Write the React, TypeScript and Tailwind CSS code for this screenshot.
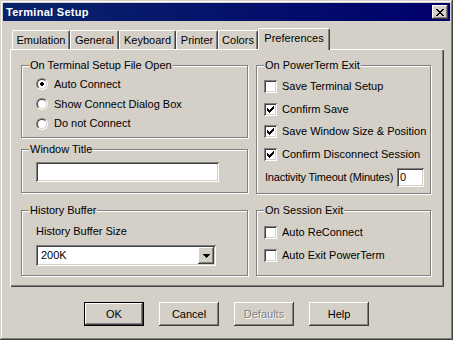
import React from "react";

const RAISED =
  "shadow-[inset_-1px_-1px_#404040,inset_1px_1px_#ffffff,inset_-2px_-2px_#808080,inset_2px_2px_#d4d0c8]";
const SUNKEN =
  "shadow-[inset_1px_1px_#808080,inset_-1px_-1px_#ffffff,inset_2px_2px_#404040,inset_-2px_-2px_#d4d0c8]";

function CheckBox({ checked }: { checked: boolean }) {
  return (
    <div className={"relative w-[13px] h-[13px] shrink-0 bg-white " + SUNKEN}>
      {checked && (
        <svg
          className="absolute left-[3px] top-[3px]"
          width="7"
          height="7"
          viewBox="0 0 7 7"
          shapeRendering="crispEdges"
        >
          <path
            fill="#000"
            d="M6 0h1v1h-1z M5 1h2v1h-2z M0 2h1v1h-1z M4 2h3v1h-3z M0 3h2v1h-2z M3 3h3v1h-3z M0 4h5v1h-5z M1 5h3v1h-3z M2 6h1v1h-1z"
          />
        </svg>
      )}
    </div>
  );
}

function Radio({ checked }: { checked: boolean }) {
  return (
    <div className="w-[12px] h-[12px] shrink-0 rounded-full border border-t-[#808080] border-l-[#808080] border-b-white border-r-white">
      <div className="w-full h-full rounded-full bg-white border border-t-[#404040] border-l-[#404040] border-b-[#d4d0c8] border-r-[#d4d0c8] flex items-center justify-center">
        {checked && (
          <svg width="4" height="4" viewBox="0 0 4 4" shapeRendering="crispEdges">
            <path fill="#000" d="M1 0h2v1h-2z M0 1h4v2h-4z M1 3h2v1h-2z" />
          </svg>
        )}
      </div>
    </div>
  );
}

function Group({
  title,
  className,
  children,
}: {
  title: string;
  className: string;
  children?: React.ReactNode;
}) {
  return (
    <div
      className={
        "relative border border-[#808080] shadow-[1px_1px_0_#ffffff,inset_1px_1px_0_#ffffff] " +
        className
      }
    >
      <span className="absolute left-[7px] -top-[7px] px-[1px] bg-[#d4d0c8] leading-[13px] whitespace-nowrap">
        {title}
      </span>
      {children}
    </div>
  );
}

function CheckRow({
  label,
  checked,
  className,
}: {
  label: string;
  checked: boolean;
  className: string;
}) {
  return (
    <div className={"flex items-center " + className}>
      <CheckBox checked={checked} />
      <span className="ml-[5px] whitespace-nowrap">{label}</span>
    </div>
  );
}

function RadioRow({
  label,
  checked,
  className,
}: {
  label: string;
  checked: boolean;
  className: string;
}) {
  return (
    <div className={"flex items-center " + className}>
      <Radio checked={checked} />
      <span className="ml-[6px] whitespace-nowrap">{label}</span>
    </div>
  );
}

function Btn({
  label,
  isDefault,
  disabled,
}: {
  label: string;
  isDefault?: boolean;
  disabled?: boolean;
}) {
  const inner = (
    <div
      className={
        "w-full h-full flex items-center justify-center bg-[#d4d0c8] " + RAISED
      }
    >
      <span
        className={
          disabled
            ? "text-[#808080] [text-shadow:1px_1px_0_#ffffff]"
            : "text-black"
        }
      >
        {label}
      </span>
    </div>
  );
  if (isDefault) {
    return (
      <div className="w-[60px] h-[24px] border border-black">{inner}</div>
    );
  }
  return <div className="w-[60px] h-[24px]">{inner}</div>;
}

export default function App() {
  return (
    <div
      className={
        "w-[453px] h-[340px] bg-[#d4d0c8] p-[3px] flex flex-col text-[11px] leading-[13px] text-black [font-family:'Liberation_Sans',Arial,sans-serif] shadow-[inset_-1px_-1px_#404040,inset_1px_1px_#d4d0c8,inset_-2px_-2px_#808080,inset_2px_2px_#ffffff]"
      }
    >
      {/* Title bar */}
      <div className="h-[18px] shrink-0 flex items-center justify-between pl-[3px] pr-[2px] bg-[linear-gradient(to_right,#0a246a,#00006c)]">
        <span className="text-white font-bold tracking-[0.3px]">Terminal Setup</span>
        <div className={"relative w-[16px] h-[14px] bg-[#d4d0c8] " + RAISED}>
          <svg
            className="absolute left-[4px] top-[4px]"
            width="8"
            height="7"
            viewBox="0 0 8 7"
            shapeRendering="crispEdges"
          >
            <path
              fill="#000"
              d="M0 0h2v1h-2z M6 0h2v1h-2z M1 1h2v1h-2z M5 1h2v1h-2z M2 2h4v1h-4z M3 3h2v1h-2z M2 4h4v1h-4z M1 5h2v1h-2z M5 5h2v1h-2z M0 6h2v1h-2z M6 6h2v1h-2z"
            />
          </svg>
        </div>
      </div>

      {/* Tabs + panel */}
      <div className="ml-[7px] mt-[7px] w-[434px]">
        <div className="h-[21px] flex items-end pl-[2px]">
          <div className="w-[58px] h-[19px] text-center pt-[3px] border-l border-t border-white border-r border-r-[#404040] rounded-t-[2px] shadow-[inset_-1px_0_#808080]">
            Emulation
          </div>
          <div className="w-[49px] h-[19px] text-center pt-[3px] border-l border-t border-white border-r border-r-[#404040] rounded-t-[2px] shadow-[inset_-1px_0_#808080]">
            General
          </div>
          <div className="w-[57px] h-[19px] text-center pt-[3px] border-l border-t border-white border-r border-r-[#404040] rounded-t-[2px] shadow-[inset_-1px_0_#808080]">
            Keyboard
          </div>
          <div className="w-[42px] h-[19px] text-center pt-[3px] border-l border-t border-white border-r border-r-[#404040] rounded-t-[2px] shadow-[inset_-1px_0_#808080]">
            Printer
          </div>
          <div className="w-[40px] h-[19px] text-center pt-[3px] border-l border-t border-white border-r border-r-[#404040] rounded-t-[2px] shadow-[inset_-1px_0_#808080]">
            Colors
          </div>
          <div className="relative z-10 w-[72px] h-[22px] -mb-[1px] bg-[#d4d0c8] text-center pt-[3px] border-l border-t border-white border-r border-r-[#404040] rounded-t-[2px] shadow-[inset_-1px_0_#808080]">
            Preferences
          </div>
        </div>

        <div className="h-[238px] pt-[16px] pl-[11px] flex gap-[8px] shadow-[inset_1px_1px_#ffffff,inset_-1px_-1px_#404040,inset_-2px_-2px_#808080]">
          {/* Left column */}
          <div className="w-[227px] flex flex-col">
            <Group title="On Terminal Setup File Open" className="h-[73px] pt-[8px] pl-[14px]">
              <RadioRow label="Auto Connect" checked className="h-[20px]" />
              <RadioRow label="Show Connect Dialog Box" checked={false} className="h-[20px]" />
              <RadioRow label="Do not Connect" checked={false} className="h-[19px]" />
            </Group>

            <Group title="Window Title" className="mt-[11px] h-[44px] pt-[12px] pl-[14px]">
              <div className={"w-[183px] h-[20px] bg-white " + SUNKEN} />
            </Group>

            <Group title="History Buffer" className="mt-[17px] h-[66px] pt-[14px] pl-[14px]">
              <div className="leading-[13px]">History Buffer Size</div>
              <div
                className={
                  "mt-[7px] w-[180px] h-[21px] bg-white flex items-center p-[2px] " +
                  SUNKEN
                }
              >
                <span className="flex-1 pl-[3px]">200K</span>
                <div
                  className={
                    "w-[16px] h-[17px] bg-[#d4d0c8] flex items-center justify-center " +
                    RAISED
                  }
                >
                  <svg width="7" height="4" viewBox="0 0 7 4" shapeRendering="crispEdges">
                    <path fill="#000" d="M0 0h7v1h-7z M1 1h5v1h-5z M2 2h3v1h-3z M3 3h1v1h-1z" />
                  </svg>
                </div>
              </div>
            </Group>
          </div>

          {/* Right column */}
          <div className="w-[175px] flex flex-col">
            <Group title="On PowerTerm Exit" className="h-[129px] pt-[9px] pl-[7px]">
              <CheckRow label="Save Terminal Setup" checked={false} className="h-[23px]" />
              <CheckRow label="Confirm Save" checked className="h-[22px]" />
              <CheckRow label="Save Window Size & Position" checked className="h-[23px]" />
              <CheckRow label="Confirm Disconnect Session" checked className="h-[22px]" />
              <div className="mt-[3px] h-[19px] flex items-center pr-[6px]">
                <span className="ml-[1px] whitespace-nowrap tracking-[-0.2px]">
                  Inactivity Timeout (Minutes)
                </span>
                <div
                  className={
                    "ml-auto w-[27px] h-[19px] bg-white flex items-center pl-[3px] " +
                    SUNKEN
                  }
                >
                  0
                </div>
              </div>
            </Group>

            <Group title="On Session Exit" className="mt-[16px] h-[66px] pt-[10px] pl-[7px]">
              <CheckRow label="Auto ReConnect" checked={false} className="h-[23px]" />
              <CheckRow label="Auto Exit PowerTerm" checked={false} className="h-[23px]" />
            </Group>
          </div>
        </div>
      </div>

      {/* Buttons */}
      <div className="mt-[15px] ml-[81px] flex gap-[15px]">
        <Btn label="OK" isDefault />
        <Btn label="Cancel" />
        <Btn label="Defaults" disabled />
        <Btn label="Help" />
      </div>
    </div>
  );
}
